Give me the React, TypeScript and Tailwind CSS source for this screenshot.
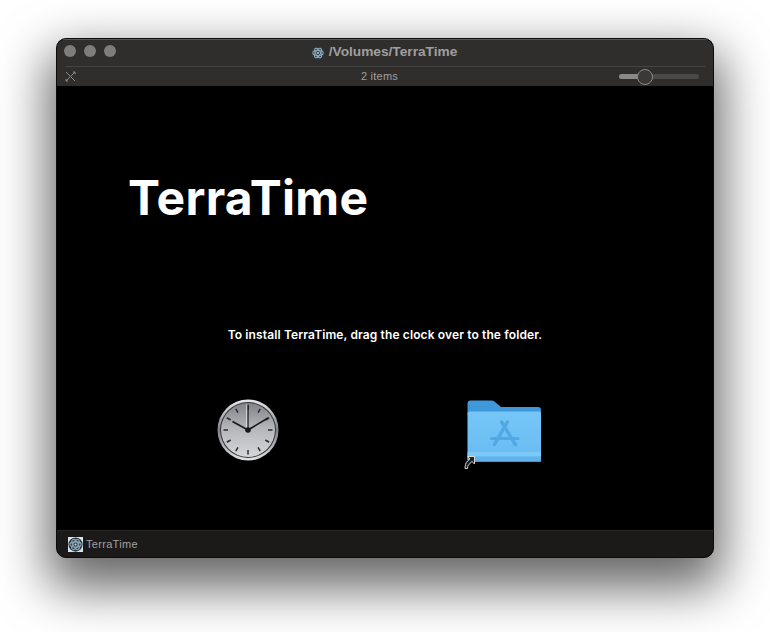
const sans = "font-['Liberation_Sans',Arial,sans-serif]";

function ElectronIcon({ size, framed }: { size: number; framed?: boolean }) {
  return (
    <svg width={size} height={size} viewBox="0 0 16 16" fill="none">
      {framed && <rect width="16" height="16" fill="#d9e6ea" />}
      <circle cx="8" cy="8" r="7.6" fill="#2b3a46" />
      <g stroke="#93a9b6" strokeWidth="1.2" fill="none">
        <ellipse cx="8" cy="8" rx="6" ry="2.8" />
        <ellipse cx="8" cy="8" rx="6" ry="2.8" transform="rotate(60 8 8)" />
        <ellipse cx="8" cy="8" rx="6" ry="2.8" transform="rotate(120 8 8)" />
      </g>
      <circle cx="8" cy="8" r="1.1" fill="#cfdfe8" />
    </svg>
  );
}

function Clock() {
  const ticks = Array.from({ length: 12 }, (_, i) => i * 30);
  return (
    <svg width="62" height="62" viewBox="0 0 62 62">
      <defs>
        <linearGradient id="rim" x1="0" y1="0" x2="0" y2="1">
          <stop offset="0" stopColor="#e8e9ea" />
          <stop offset="0.5" stopColor="#808286" />
          <stop offset="1" stopColor="#e2e3e5" />
        </linearGradient>
        <linearGradient id="face" x1="0" y1="0" x2="0" y2="1">
          <stop offset="0" stopColor="#7f8287" />
          <stop offset="0.45" stopColor="#b3b5b9" />
          <stop offset="1" stopColor="#d6d7da" />
        </linearGradient>
      </defs>
      <circle cx="31" cy="31" r="30.5" fill="url(#rim)" />
      <circle cx="31" cy="31" r="28" fill="#34363a" />
      <circle cx="31" cy="31" r="27" fill="url(#face)" />
      {ticks.map((a) => (
        <line
          key={a}
          x1="31"
          y1="6.5"
          x2="31"
          y2="11"
          stroke="#2a2c30"
          strokeWidth="1.5"
          transform={`rotate(${a} 31 31)`}
        />
      ))}
      <line x1="30" y1="31" x2="30" y2="5.5" stroke="#f4f4f4" strokeWidth="1.2" />
      <line x1="31" y1="31" x2="31" y2="5.5" stroke="#111" strokeWidth="1.2" />
      <line x1="31" y1="31" x2="15.5" y2="22.5" stroke="#1b1c1f" strokeWidth="1.8" />
      <line x1="31" y1="31" x2="51" y2="19" stroke="#1b1c1f" strokeWidth="1.6" />
      <circle cx="31" cy="31" r="2.8" fill="#15171a" />
    </svg>
  );
}

function AppsFolder() {
  return (
    <svg width="82" height="72" viewBox="0 0 82 72">
      <defs>
        <linearGradient id="fbody" x1="0" y1="0" x2="0" y2="1">
          <stop offset="0" stopColor="#76c6f8" />
          <stop offset="1" stopColor="#67bbf2" />
        </linearGradient>
      </defs>
      <path
        d="M4.5 14V4.5a3 3 0 0 1 3-3h21c1.2 0 2.2.4 3.2 1.2L38 8h37a3 3 0 0 1 3 3v5H4.5z"
        fill="#3f98da"
      />
      <path
        d="M4.5 15a2.5 2.5 0 0 1 2.5-2.5h68.5A2.5 2.5 0 0 1 78 15v45a3 3 0 0 1-3 3H7.5a3 3 0 0 1-3-3z"
        fill="url(#fbody)"
      />
      <rect x="4.5" y="53" width="73.5" height="4" fill="#7cc8f7" />
      <path d="M4.5 58H78v2a3 3 0 0 1-3 3H7.5a3 3 0 0 1-3-3z" fill="#5fb2ec" />
      <rect x="4.5" y="62" width="73.5" height="1" fill="#3f98da" />
      <g stroke="#52a8e4" strokeLinecap="round" fill="none">
        <path d="M38.7 23l13.6 22.5" strokeWidth="3.4" />
        <path d="M44.3 23L31.4 45.5" strokeWidth="3.4" />
        <path d="M28.5 39.5h26.5" strokeWidth="3" />
      </g>
      <path
        d="M11.5 57.5V65L9 62.5 5.5 66c-.8.9-1 2-1 3.5H2c0-2.8.6-5.6 2.5-7.5L7 59.8 4.5 57.5z"
        fill="#232323"
        stroke="#e9e9e9"
        strokeWidth="0.9"
      />
    </svg>
  );
}

export default function App() {
  return (
    <div className={`min-h-[632px] w-[770px] bg-white pl-[56px] pt-[38px] ${sans}`}>
      <div className="flex h-[520px] w-[658px] flex-col overflow-hidden rounded-[10px] border border-[#0c0c0c] bg-black shadow-[0_22px_50px_8px_rgba(0,0,0,0.6)]">
        <div className="bg-[#2f2e2d] shadow-[inset_0_1px_0_#5a5958]">
          <div className="relative flex h-[27px] items-start px-[7px] pt-[6px]">
            <div className="flex gap-[8px]">
              <span className="h-[12px] w-[12px] rounded-full bg-[#7e7d7c]" />
              <span className="h-[12px] w-[12px] rounded-full bg-[#7e7d7c]" />
              <span className="h-[12px] w-[12px] rounded-full bg-[#7e7d7c]" />
            </div>
            <div className="absolute inset-x-0 top-0 flex h-[27px] items-center justify-center gap-[4px] pr-[2px]">
              <ElectronIcon size={14} />
              <span className="text-[13.7px] font-bold text-[#a09f9e]">/Volumes/TerraTime</span>
            </div>
          </div>
          <div className="mx-[8px] h-px bg-[#444342]" />
          <div className="relative flex h-[19px] items-center px-[8px]">
            <svg width="11" height="11" viewBox="0 0 11 11" stroke="#908f8e" strokeWidth="1" fill="none">
              <path d="M1 1l9 9M10 1L1 10M8 1h2v2M1 8v2h2" />
            </svg>
            <span className="absolute inset-x-0 pr-[11px] text-center text-[11px] tracking-[0.25px] text-[#a09f9e]">2 items</span>
            <div className="relative ml-auto mr-[6px] h-[5px] w-[80px] rounded-full bg-[#4a4948]">
              <div className="h-[5px] w-[20px] rounded-l-full bg-[#8a8988]" />
              <div className="absolute left-[18px] top-[-5px] h-[16px] w-[16px] rounded-full border border-[#8a8988] bg-[#3a3938]" />
            </div>
          </div>
        </div>
        <div className="flex-1 bg-black pt-[84px] font-['Inter',sans-serif] text-white">
          <div className="pl-[71px] text-[48px] font-bold leading-[56px] tracking-[0.3px]">TerraTime</div>
          <div className="mt-[100px] text-center text-[12px] font-semibold leading-[18px] tracking-[0.12px]">
            To install TerraTime, drag the clock over to the folder.
          </div>
          <div className="mt-[55px] flex items-start pl-[160px]">
            <Clock />
            <div className="ml-[184px]">
              <AppsFolder />
            </div>
          </div>
        </div>
        <div className="flex h-[27px] items-center gap-[3px] border-t border-[#2a2928] bg-[#1b1a19] pl-[11px]">
          <ElectronIcon size={15} framed />
          <span className="text-[11px] tracking-[0.3px] text-[#a3a2a1]">TerraTime</span>
        </div>
      </div>
    </div>
  );
}
